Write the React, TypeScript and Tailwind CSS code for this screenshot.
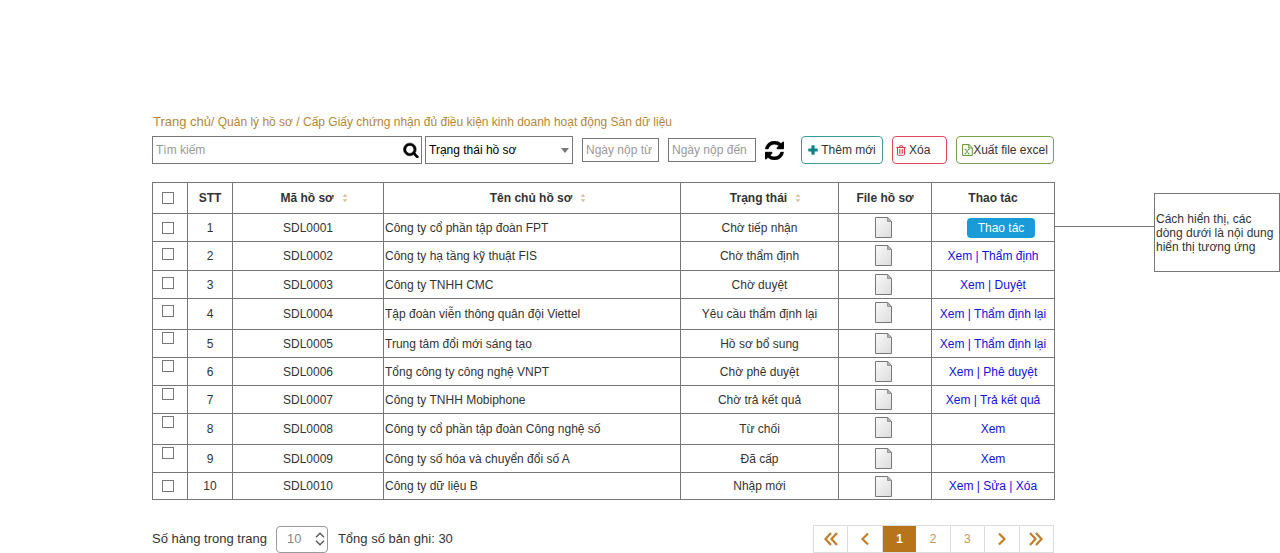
import React from 'react';

type Row = {
  code: string;
  owner: string;
  status: string;
  actions: string[];
  height: string;
  tick: string;
};

const MID = 'align-middle';
const HIGH = 'align-top pt-1.5';
const TOP = 'align-top pt-0.5';

const rows: Row[] = [
  { code: 'SDL0001', owner: 'Công ty cổ phần tập đoàn FPT', status: 'Chờ tiếp nhận', actions: [], height: 'h-[28px]', tick: MID },
  { code: 'SDL0002', owner: 'Công ty hạ tầng kỹ thuật FIS', status: 'Chờ thẩm định', actions: ['Xem', 'Thẩm định'], height: 'h-[29px]', tick: HIGH },
  { code: 'SDL0003', owner: 'Công ty TNHH CMC', status: 'Chờ duyệt', actions: ['Xem', 'Duyệt'], height: 'h-[28px]', tick: HIGH },
  { code: 'SDL0004', owner: 'Tập đoàn viễn thông quân đội Viettel', status: 'Yêu cầu thẩm định lại', actions: ['Xem', 'Thẩm định lại'], height: 'h-[31px]', tick: HIGH },
  { code: 'SDL0005', owner: 'Trung tâm đổi mới sáng tạo', status: 'Hồ sơ bổ sung', actions: ['Xem', 'Thẩm định lại'], height: 'h-[28px]', tick: TOP },
  { code: 'SDL0006', owner: 'Tổng công ty công nghệ VNPT', status: 'Chờ phê duyệt', actions: ['Xem', 'Phê duyệt'], height: 'h-[28px]', tick: TOP },
  { code: 'SDL0007', owner: 'Công ty TNHH Mobiphone', status: 'Chờ trả kết quả', actions: ['Xem', 'Trả kết quả'], height: 'h-[28px]', tick: TOP },
  { code: 'SDL0008', owner: 'Công ty cổ phần tập đoàn Công nghệ số', status: 'Từ chối', actions: ['Xem'], height: 'h-[31px]', tick: TOP },
  { code: 'SDL0009', owner: 'Công ty số hóa và chuyển đổi số A', status: 'Đã cấp', actions: ['Xem'], height: 'h-[28px]', tick: TOP },
  { code: 'SDL0010', owner: 'Công ty dữ liệu B', status: 'Nhập mới', actions: ['Xem', 'Sửa', 'Xóa'], height: 'h-[27px]', tick: MID },
];

const SearchIcon = () => (
  <svg viewBox="0 0 1792 1792" className="size-4 fill-black stroke-black" strokeWidth="70" aria-hidden="true">
    <path d="M1216 832q0-185-131.5-316.5t-316.5-131.5-316.5 131.5-131.5 316.5 131.5 316.5 316.5 131.5 316.5-131.5 131.5-316.5zm512 832q0 52-38 90t-90 38q-54 0-90-38l-343-342q-179 124-399 124-143 0-273.5-55.5t-225-150-150-225-55.5-273.5 55.5-273.5 150-225 225-150 273.5-55.5 273.5 55.5 225 150 150 225 55.5 273.5q0 220-124 399l343 343q37 37 37 90z" />
  </svg>
);

const RefreshIcon = () => (
  <svg viewBox="0 0 1536 1536" className="size-[19px] fill-black stroke-black" strokeWidth="40" aria-hidden="true">
    <path d="M1511 928q0 5-1 7-64 268-268 434.5t-478 166.5q-146 0-282.5-55t-243.5-157l-129 129q-19 19-45 19t-45-19-19-45v-448q0-26 19-45t45-19h448q26 0 45 19t19 45-19 45l-137 137q71 66 161 102t187 36q134 0 250-65t186-179q11-17 53-117 8-23 30-23h192q13 0 22.5 9.5t9.5 22.5zm25-800v448q0 26-19 45t-45 19h-448q-26 0-45-19t-19-45 19-45l138-138q-148-137-349-137-134 0-250 65t-186 179q-11 17-53 117-8 23-30 23h-199q-13 0-22.5-9.5t-9.5-22.5v-7q65-268 270-434.5t480-166.5q146 0 284 55.5t245 156.5l130-129q19-19 45-19t45 19 19 45z" />
  </svg>
);

const PlusIcon = () => (
  <svg viewBox="0 0 10 10" className="size-[10px] fill-[#0f8284]" aria-hidden="true">
    <path d="M4 .3h2q.6 0 .6.6v2.5h2.5q.6 0 .6.6v2q0 .6-.6.6H6.600v2.500q0 .6-.6.6H4q-.6 0-.6-.6V6.600H.9q-.6 0-.6-.6V4q0-.6.6-.6h2.500V.9q0-.6.6-.6z" />
  </svg>
);

const TrashIcon = () => (
  <svg viewBox="0 0 10 11" className="h-[11px] w-[10px]" fill="none" stroke="#dc3a4b" aria-hidden="true">
    <path d="M.3 2.500h9.400M3.200 2.300l.5-1.500h2.600l.5 1.500M1.500 2.700v6.600q0 1 .9 1h5.200q.9 0 .9-1V2.700" />
    <path d="M3.500 4.200v4.600M5 4.200v4.600M6.500 4.200v4.600" strokeWidth=".8" />
  </svg>
);

const ExcelIcon = () => (
  <svg viewBox="0 0 11 12" className="h-[12px] w-[11px]" fill="none" stroke="#5f9130" aria-hidden="true">
    <path d="M.6 .6h6.400l3.300 3.200v7.600H.6zM6.800.7v3.300h3.300" />
    <path d="M3.300 5.300l3.500 4.400M6.800 5.300L3.300 9.700M2.500 5.300h1.700M5.900 5.300h1.700M2.500 9.700h1.700M5.900 9.700h1.700" strokeWidth=".9" />
  </svg>
);

const SortIcon = () => (
  <svg viewBox="0 0 6 10" className="h-[10px] w-[6px] fill-[#d9bd94]" aria-hidden="true">
    <path d="M3 1l2.500 2.700h-5zM3 9L.5 6.300h5z" />
  </svg>
);

const FileIcon = () => (
  <svg viewBox="0 0 17 21" className="mx-auto block h-[21px] w-[17px]" role="img" aria-label="Tệp">
    <defs>
      <linearGradient id="sheet" x1="0" y1="0" x2="1" y2="1">
        <stop offset="0" stopColor="#fafafa" />
        <stop offset="1" stopColor="#dcdcdc" />
      </linearGradient>
    </defs>
    <path d="M.5.5h12.200l3.800 3.800v16.200H.5z" fill="url(#sheet)" stroke="#777" />
    <path d="M12.500.5v4h4z" fill="#b5b5b5" stroke="#888" strokeWidth=".8" />
  </svg>
);

const Chevron = ({ d, wide }: { d: string; wide?: boolean }) => (
  <svg
    viewBox={wide ? '0 0 14 14' : '0 0 8 14'}
    className={wide ? 'h-[14px] w-[14px]' : 'h-[14px] w-[8px]'}
    fill="none"
    stroke="#c07f2b"
    strokeWidth="2.2"
    aria-hidden="true"
  >
    <path d={d} />
  </svg>
);

const cell = 'border border-[#777] p-0';
const pageCell = 'flex h-[26px] flex-1 items-center justify-center border-r border-[#dcdcdc] last:border-r-0';

function Tick({ label }: { label: string }) {
  return (
    <input
      type="checkbox"
      aria-label={label}
      className="mx-auto block size-3 appearance-none border border-[#777] bg-white checked:bg-[#189bd7]"
    />
  );
}

function Toolbar() {
  return (
    <form className="mt-1.5 flex items-center" onSubmit={(e) => e.preventDefault()}>
      <div className="flex h-[28px] min-w-0 flex-1 items-center border border-[#777] pr-0.5 pl-[3px]">
        <input aria-label="Tìm kiếm" placeholder="Tìm kiếm" className="min-w-0 flex-1 outline-none placeholder:text-[#999]" />
        <button type="submit" aria-label="Tìm">
          <SearchIcon />
        </button>
      </div>
      <div className="relative ml-[3px] w-[148px]">
        <select aria-label="Trạng thái hồ sơ" className="h-[28px] w-full appearance-none border border-[#777] bg-white pl-[3px] text-black">
          <option>Trạng thái hồ sơ</option>
        </select>
        <svg viewBox="0 0 8 5" className="pointer-events-none absolute top-3 right-1 h-[5px] w-2 fill-[#777]" aria-hidden="true">
          <path d="M0 0h8L4 5z" />
        </svg>
      </div>
      <input aria-label="Ngày nộp từ" placeholder="Ngày nộp từ" className="ml-[9px] h-6 w-[77px] border border-[#777] pl-[3px] placeholder:text-[#999]" />
      <input aria-label="Ngày nộp đến" placeholder="Ngày nộp đến" className="ml-[9px] h-6 w-[88px] border border-[#777] pl-[3px] placeholder:text-[#999]" />
      <button type="button" aria-label="Làm mới" className="ml-[9px]">
        <RefreshIcon />
      </button>
      <button type="button" className="ml-[17px] flex h-[28px] w-[82px] items-center justify-center gap-[3px] rounded border border-[#3c9c9c]">
        <PlusIcon />
        Thêm mới
      </button>
      <button type="button" className="ml-[9px] flex h-[28px] w-[55px] items-center gap-[3px] rounded border border-[#dc4a5a] pl-[3px]">
        <TrashIcon />
        Xóa
      </button>
      <button type="button" className="mr-px ml-[9px] flex h-[28px] w-[98px] items-center justify-center rounded border border-[#7ba34f]">
        <ExcelIcon />
        Xuất file excel
      </button>
    </form>
  );
}

function RecordTable() {
  return (
    <table className="mt-[18px] w-full table-fixed border-collapse text-center">
      <colgroup>
        <col className="w-[35px]" />
        <col className="w-[45px]" />
        <col className="w-[151px]" />
        <col />
        <col className="w-[158px]" />
        <col className="w-[93px]" />
        <col className="w-[123px]" />
      </colgroup>
      <thead>
        <tr className="h-[31px]">
          <th className="border border-[#777] py-0 pr-1 pl-0">
            <Tick label="Chọn tất cả" />
          </th>
          <th className={cell}>STT</th>
          {['Mã hồ sơ', 'Tên chủ hồ sơ', 'Trạng thái'].map((title) => (
            <th key={title} className={cell}>
              <span className="flex items-center justify-center gap-2 pl-3">
                {title}
                <SortIcon />
              </span>
            </th>
          ))}
          <th className={cell}>File hồ sơ</th>
          <th className={cell}>Thao tác</th>
        </tr>
      </thead>
      <tbody>
        {rows.map((row, i) => (
          <tr key={row.code} className={row.height}>
            <td className={`border border-[#777] pr-1 pb-0 pl-0 ${row.tick}`}>
              <Tick label={`Chọn ${row.code}`} />
            </td>
            <td className={cell}>{i + 1}</td>
            <td className={cell}>{row.code}</td>
            <td className="border border-[#777] py-0 pr-0 pl-px text-left">{row.owner}</td>
            <td className={cell}>{row.status}</td>
            <td className="border border-[#777] pt-[3px] pr-1 pb-0 pl-0 align-top">
              <FileIcon />
            </td>
            <td className={cell}>
              {row.actions.length === 0 ? (
                <span className="flex justify-center pl-4">
                  <button type="button" className="h-5 w-[68px] rounded bg-[#189bd7] text-white">
                    Thao tác
                  </button>
                </span>
              ) : (
                <span className="whitespace-nowrap text-[#1410e0]">
                  {row.actions.map((action, n) => (
                    <React.Fragment key={action}>
                      {n > 0 && ' | '}
                      <a href="#">{action}</a>
                    </React.Fragment>
                  ))}
                </span>
              )}
            </td>
          </tr>
        ))}
      </tbody>
    </table>
  );
}

function Footer() {
  return (
    <footer className="mt-[25px] flex items-center text-[13px]">
      <label htmlFor="page-size">Số hàng trong trang</label>
      <div className="relative mr-[10px] ml-[9px]">
        <select id="page-size" className="block h-[27px] w-[52px] appearance-none rounded border border-[#999] bg-white pl-[10px] text-[#888]">
          <option>10</option>
        </select>
        <svg viewBox="0 0 10 14" className="pointer-events-none absolute top-1.5 right-[3px] h-[14px] w-[10px]" fill="none" stroke="#555" strokeWidth="1.300" aria-hidden="true">
          <path d="M1 5.200L5 1.200l4 4M1 8.800l4 4 4-4" />
        </svg>
      </div>
      <span>Tổng số bản ghi: 30</span>
      <nav aria-label="Phân trang" className="mr-px ml-auto flex w-[241px] border border-[#dcdcdc] text-xs text-[#c0985c]">
        <a href="#" aria-label="Trang đầu" className={pageCell}>
          <Chevron wide d="M7 1L1.500 7 7 13M13 1L7.500 7l5.500 6" />
        </a>
        <a href="#" aria-label="Trang trước" className={pageCell}>
          <Chevron d="M7 1.500L1.500 7 7 12.500" />
        </a>
        <a href="#" aria-current="page" className="flex h-[26px] flex-1 items-center justify-center bg-[#b8741a] font-bold text-white">
          1
        </a>
        <a href="#" className={pageCell}>2</a>
        <a href="#" className={pageCell}>3</a>
        <a href="#" aria-label="Trang sau" className={pageCell}>
          <Chevron d="M1 1.500L6.500 7 1 12.500" />
        </a>
        <a href="#" aria-label="Trang cuối" className={pageCell}>
          <Chevron wide d="M1 1l5.500 6L1 13M7 1l5.500 6L7 13" />
        </a>
      </nav>
    </footer>
  );
}

export default function App() {
  return (
    <div className="flex items-start bg-white font-['Liberation_Sans',Arial,sans-serif] text-xs text-[#333]">
      <main className="min-w-0 flex-1 pt-[114px] pl-[152px]">
        <nav aria-label="Đường dẫn" className="h-4 pl-px leading-4 text-[#b58638]">
          <a href="#" className="text-[13px]">Trang chủ</a>/ <a href="#">Quản lý hồ sơ</a> /{' '}
          <a href="#">Cấp Giấy chứng nhận đủ điều kiện kinh doanh hoạt động Sàn dữ liệu</a>
        </nav>
        <Toolbar />
        <RecordTable />
        <Footer />
      </main>
      <div className="mt-[226px] w-[99px] shrink-0 border-t border-[#777]" />
      <aside className="mt-[193px] flex h-[79px] w-[126px] shrink-0 items-center border border-[#777] pl-px leading-[14px]">
        Cách hiển thị, các dòng dưới là nội dung hiển thị tương ứng
      </aside>
    </div>
  );
}
